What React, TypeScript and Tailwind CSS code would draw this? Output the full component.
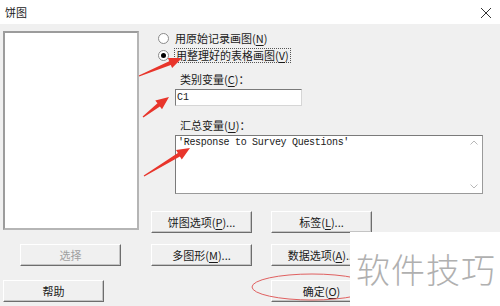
import React from "react";

const cjk = { fontFamily: '"Noto Sans CJK SC", "Noto Sans", sans-serif' };

// 带下划线的快捷键字母
function Key({ k }: { k: string }) {
  return (
    <>
      (<span className="underline underline-offset-2">{k}</span>)
    </>
  );
}

function Btn({
  children,
  w = "w-[101px]",
  disabled = false,
  className = "",
}: {
  children: React.ReactNode;
  w?: string;
  disabled?: boolean;
  className?: string;
}) {
  return (
    <div
      className={`${w} h-[22px] flex items-center justify-center text-[11px] bg-[#f0f0f0] border border-t-white border-l-white border-r-[#6d6d6d] border-b-[#6d6d6d] shadow-[inset_-1px_-1px_0_#c4c4c4] ${
        disabled ? "text-[#a0a0a0]" : "text-[#1a1a1a]"
      } ${className}`}
    >
      {children}
    </div>
  );
}

function Radio({ checked }: { checked?: boolean }) {
  return (
    <span className="w-[11px] h-[11px] rounded-full border border-[#8a8a8a] bg-white flex items-center justify-center shrink-0">
      {checked && <span className="w-[5px] h-[5px] rounded-full bg-black" />}
    </span>
  );
}

function arrow(x1: number, y1: number, x2: number, y2: number) {
  const dx = x2 - x1;
  const dy = y2 - y1;
  const len = Math.hypot(dx, dy);
  const ux = dx / len;
  const uy = dy / len;
  const nx = -uy;
  const ny = ux;
  const hl = 13;
  const bx = x2 - ux * hl;
  const by = y2 - uy * hl;
  const pts = [
    [x1 + nx * 0.6, y1 + ny * 0.6],
    [bx + nx * 2, by + ny * 2],
    [bx + nx * 5.5, by + ny * 5.5],
    [x2, y2],
    [bx - nx * 5.5, by - ny * 5.5],
    [bx - nx * 2, by - ny * 2],
    [x1 - nx * 0.6, y1 - ny * 0.6],
  ];
  return pts.map((p) => p.map((v) => v.toFixed(1)).join(",")).join(" ");
}

export default function App() {
  return (
    <div className="relative w-[500px] h-[306px] overflow-hidden bg-[#f0f0f0] text-[#1a1a1a]" style={cjk}>
      {/* 标题栏 */}
      <div className="h-[24px] bg-white flex items-center justify-between pl-[5px] pr-[8px]">
        <span className="text-[11px]">饼图</span>
        <svg width="12" height="12" viewBox="0 0 12 12" className="mt-[2px]">
          <path d="M1 1 L11 11 M11 1 L1 11" stroke="#333" strokeWidth="1" />
        </svg>
      </div>

      <div className="pt-[7px]">
        <div className="flex">
          {/* 变量列表 */}
          <div className="ml-[3px] w-[136px] h-[199px] bg-white border-2 border-t-[#9c9c9c] border-l-[#9c9c9c] border-r-[#b5b5b5] border-b-[#b5b5b5]" />

          {/* 右侧面板 */}
          <div className="ml-[12px] flex flex-col">
            <div className="flex items-center gap-[6px] ml-[7px] h-[14px]">
              <Radio />
              <span className="text-[11px] leading-none">
                用原始记录画图<Key k="N" />
              </span>
            </div>
            <div className="flex items-center gap-[5px] ml-[7px] h-[16px] mt-[2px]">
              <Radio checked />
              <span className="text-[11px] leading-none border border-dotted border-[#555] px-[1px] py-[1px]">
                用整理好的表格画图<Key k="V" />
              </span>
            </div>

            <div className="ml-[29px] mt-[11px] text-[11px] leading-none">
              类别变量<Key k="C" />：
            </div>
            <div className="ml-[24px] mt-[4px] w-[127px] h-[17px] bg-white border border-t-[#7a7a7a] border-l-[#7a7a7a] border-r-[#d6d6d6] border-b-[#d6d6d6] flex items-center pl-[1px]">
              <span className="text-[10px] leading-none" style={{ fontFamily: '"Liberation Mono", monospace' }}>
                C1
              </span>
            </div>

            <div className="ml-[29px] mt-[14px] text-[11px] leading-none">
              汇总变量<Key k="U" />：
            </div>
            <div className="ml-[24px] mt-[4px] w-[308px] h-[59px] bg-white border border-t-[#7a7a7a] border-l-[#7a7a7a] border-r-[#9a9a9a] border-b-[#9a9a9a] flex">
              <div
                className="flex-1 pl-[2px] pt-[2px] text-[10px] leading-none tracking-[-0.3px]"
                style={{ fontFamily: '"Liberation Mono", monospace' }}
              >
                'Response to Survey Questions'
              </div>
              <div className="w-[16px] flex flex-col justify-between items-center py-[4px] text-[#b8b8b8]">
                <svg width="8" height="5" viewBox="0 0 8 5">
                  <path d="M0.5 4.5 L4 1 L7.5 4.5" fill="none" stroke="currentColor" />
                </svg>
                <svg width="8" height="5" viewBox="0 0 8 5">
                  <path d="M0.5 0.5 L4 4 L7.5 0.5" fill="none" stroke="currentColor" />
                </svg>
              </div>
            </div>

            <div className="flex gap-[19px] mt-[17px]">
              <Btn>
                饼图选项<Key k="P" />...
              </Btn>
              <Btn>
                标签<Key k="L" />...
              </Btn>
            </div>
          </div>
        </div>

        {/* 第二行按钮 */}
        <div className="flex mt-[11px]">
          <Btn disabled className="ml-[20px]">
            选择
          </Btn>
          <Btn className="ml-[30px]">
            多图形<Key k="M" />...
          </Btn>
          <Btn className="ml-[19px]">
            数据选项<Key k="A" />...
          </Btn>
        </div>

        {/* 第三行按钮 */}
        <div className="flex mt-[14px]">
          <Btn className="ml-[3px]">帮助</Btn>
          <Btn className="ml-[167px]">
            确定<Key k="O" />
          </Btn>
        </div>
      </div>

      {/* 红色标注 */}
      <svg className="absolute inset-0 pointer-events-none" width="500" height="306">
        <polygon points={arrow(139, 76, 182, 58)} fill="#e8352b" />
        <polygon points={arrow(143, 117, 169, 97)} fill="#e8352b" />
        <polygon points={arrow(144, 176, 190, 148)} fill="#e8352b" />
        <ellipse cx="312" cy="287" rx="60" ry="13" fill="none" stroke="#e06060" strokeWidth="1" />
      </svg>

      {/* 水印 */}
      <div className="absolute left-[350px] top-[232px] w-[150px] h-[74px] bg-white flex items-center pl-[6px]">
        <span className="text-[34px] leading-none font-light text-[#b0b0b0] tracking-[1px]">软件技巧</span>
      </div>
    </div>
  );
}
